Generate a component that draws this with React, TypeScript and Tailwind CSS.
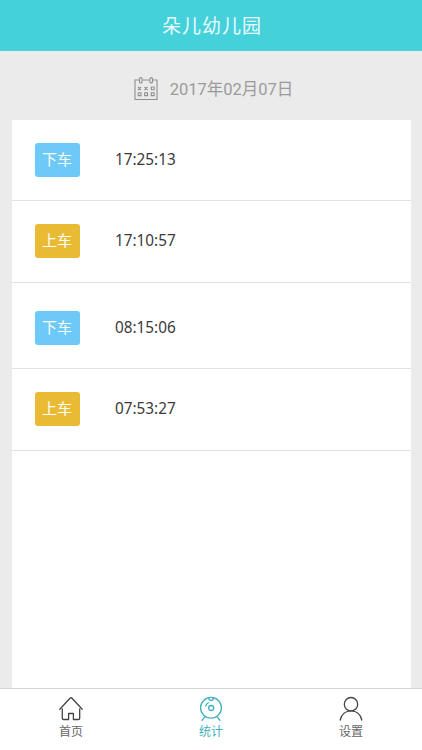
import * as React from "react";

type RecordType = "on" | "off";

interface RideRecord {
  type: RecordType;
  time: string;
  className: string;
}

const records: RideRecord[] = [
  { type: "off", time: "17:25:13", className: "h-[81px]" },
  { type: "on", time: "17:10:57", className: "h-[82px] pb-px" },
  { type: "off", time: "08:15:06", className: "h-[86px] pt-[5px]" },
  { type: "on", time: "07:53:27", className: "h-[82px] pb-px" },
];

const CalendarIcon = () => (
  <svg width="24" height="24" viewBox="0 0 24 24" fill="none" stroke="#8f8f8f" strokeWidth="1.1">
    <path d="M5.3 3H1v19.5h22V3h-4.3M8.7 3h6.6" />
    <rect x="5.5" y="0.6" width="2.6" height="5.4" rx="1.3" />
    <rect x="15.9" y="0.6" width="2.6" height="5.4" rx="1.3" />
    <path d="m4 10 3 3m0-3-3 3M10.5 10l3 3m0-3-3 3" />
    <path d="M17.3 10h2.8v2.8h-2.8zM4.2 15.8H7v2.8H4.2zM10.7 15.8h2.8v2.8h-2.8zM17.3 15.8h2.8v2.8h-2.8z" />
  </svg>
);

const HomeIcon = () => (
  <svg width="26" height="26" viewBox="0 0 26 26" fill="none" stroke="#444" strokeWidth="1.3" strokeLinecap="round" strokeLinejoin="round">
    <path d="M1.8 13.2 12 2.3q1-1 2 0l10.2 10.9" />
    <path d="M4.3 13v9.2q0 1.3 1.3 1.3h5v-6h4.8v6h5q1.3 0 1.3-1.3V13" />
  </svg>
);

const StatsIcon = () => (
  <svg width="26" height="26" viewBox="0 0 26 26" fill="none" stroke="#3fb1b9" strokeWidth="1.3" strokeLinecap="round">
    <circle cx="13" cy="11.8" r="10.4" />
    <circle cx="13.2" cy="12" r="2.5" />
    <path d="M10.8 2.2a2.3 2.3 0 0 0 4.6 0M7.6 10a6.2 6.2 0 0 1 2.8-3.3M7.2 20.6l-3.2 3.6M18.8 20.6l3.2 3.6" />
  </svg>
);

const UserIcon = () => (
  <svg width="26" height="26" viewBox="0 0 26 26" fill="none" stroke="#444" strokeWidth="1.3" strokeLinecap="round">
    <circle cx="13" cy="8.2" r="6.7" />
    <path d="M2.2 24C3.4 18.3 7.8 14.9 13 14.9S22.6 18.3 23.8 24" />
  </svg>
);

const tabs = [
  { label: "首页", icon: <HomeIcon />, active: false },
  { label: "统计", icon: <StatsIcon />, active: true },
  { label: "设置", icon: <UserIcon />, active: false },
];

const RecordRow = ({ type, time, className }: RideRecord) => {
  return (
    <li className={`flex items-center border-b border-[#e2e2e2] pl-[23px] ${className}`}>
      <span
        className={`flex h-[34px] w-[45px] items-center justify-center rounded-[3px] pt-px pr-px text-[15px] text-white ${
          type === "off" ? "bg-[#6cc9f8]" : "bg-[#e9bb35]"
        }`}
      >
        {type === "off" ? "下车" : "上车"}
      </span>
      <span className="ml-[35px] origin-left scale-x-90 pb-0.5 font-['Noto_Sans',sans-serif] text-[17px] text-[#3a3a3a]">
        {time}
      </span>
    </li>
  );
};

export default function App() {
  return (
    <div className="flex h-[750px] flex-col bg-[#ebebeb] font-['Roboto','Noto_Sans_CJK_SC',sans-serif]">
      <header className="flex h-[51px] shrink-0 items-center justify-center bg-[#45d1da] pt-[3px] pl-0.5">
        <h1 className="text-[19px] tracking-[1px] text-[#e9fbfc]">朵儿幼儿园</h1>
      </header>

      <div className="flex h-[69px] shrink-0 items-center justify-center gap-3 pt-[7px] pl-[5px]">
        <CalendarIcon />
        <span className="pt-0.5 text-[16.5px] text-[#9b9b9b]">2017年02月07日</span>
      </div>

      <ul className="mr-[11px] ml-3 flex-1 bg-white">
        {records.map((record) => (
          <RecordRow key={record.time} {...record} />
        ))}
      </ul>

      <nav className="flex h-[62px] shrink-0 border-t border-[#d5d5d5] bg-white px-px">
        {tabs.map(({ label, icon, active }) => (
          <button
            key={label}
            className={`flex flex-1 flex-col items-center pt-[7px] text-xs leading-[20px] ${
              active ? "text-[#3fb1b9]" : "text-[#666]"
            }`}
          >
            {icon}
            <span>{label}</span>
          </button>
        ))}
      </nav>
    </div>
  );
}
